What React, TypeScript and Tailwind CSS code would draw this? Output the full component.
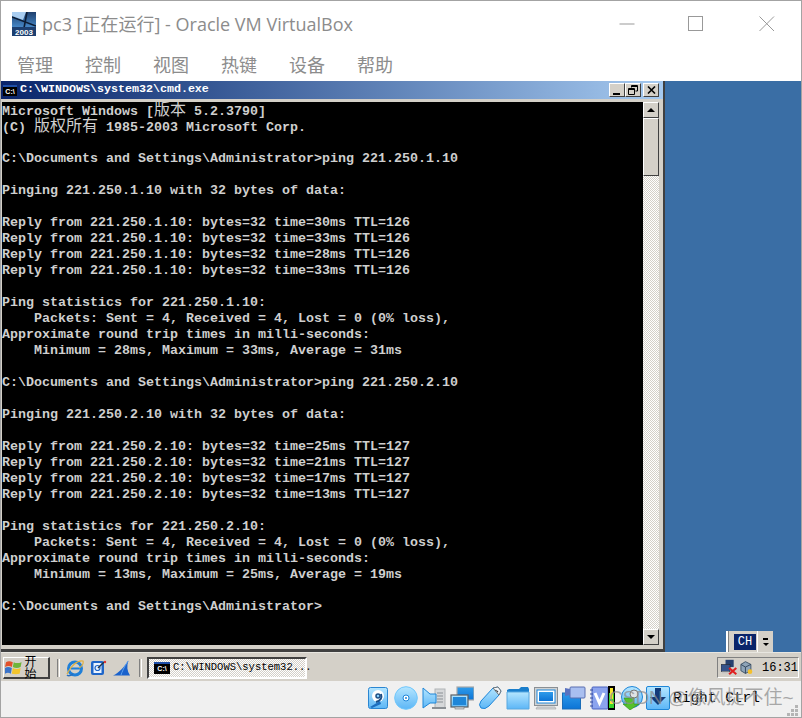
import React from "react";

const CJK = "font-['Liberation_Mono','Noto_Sans_CJK_SC',monospace]";

const lines: React.ReactNode[] = [
  <>Microsoft Windows [<span className="text-[16px] font-normal">版本</span> 5.2.3790]</>,
  <>(C) <span className="text-[16px] font-normal">版权所有</span> 1985-2003 Microsoft Corp.</>,
  "",
  "C:\\Documents and Settings\\Administrator>ping 221.250.1.10",
  "",
  "Pinging 221.250.1.10 with 32 bytes of data:",
  "",
  "Reply from 221.250.1.10: bytes=32 time=30ms TTL=126",
  "Reply from 221.250.1.10: bytes=32 time=33ms TTL=126",
  "Reply from 221.250.1.10: bytes=32 time=28ms TTL=126",
  "Reply from 221.250.1.10: bytes=32 time=33ms TTL=126",
  "",
  "Ping statistics for 221.250.1.10:",
  "    Packets: Sent = 4, Received = 4, Lost = 0 (0% loss),",
  "Approximate round trip times in milli-seconds:",
  "    Minimum = 28ms, Maximum = 33ms, Average = 31ms",
  "",
  "C:\\Documents and Settings\\Administrator>ping 221.250.2.10",
  "",
  "Pinging 221.250.2.10 with 32 bytes of data:",
  "",
  "Reply from 221.250.2.10: bytes=32 time=25ms TTL=127",
  "Reply from 221.250.2.10: bytes=32 time=21ms TTL=127",
  "Reply from 221.250.2.10: bytes=32 time=17ms TTL=127",
  "Reply from 221.250.2.10: bytes=32 time=13ms TTL=127",
  "",
  "Ping statistics for 221.250.2.10:",
  "    Packets: Sent = 4, Received = 4, Lost = 0 (0% loss),",
  "Approximate round trip times in milli-seconds:",
  "    Minimum = 13ms, Maximum = 25ms, Average = 19ms",
  "",
  "C:\\Documents and Settings\\Administrator>",
];

const bevel = "border border-t-white border-l-white border-r-[#404040] border-b-[#404040] bg-[#d4d0c8]";
const checker = "bg-[conic-gradient(#d4d0c8_25%,#ffffff_0_50%,#d4d0c8_0_75%,#ffffff_0)] bg-[length:2px_2px]";

function Logo2003() {
  return (
    <svg width="24" height="24" viewBox="0 0 24 24" className="shrink-0">
      <defs>
        <linearGradient id="lg" x1="0" y1="0" x2="0" y2="1">
          <stop offset="0" stopColor="#1f3f6d" />
          <stop offset="0.7" stopColor="#4a8fd0" />
          <stop offset="1" stopColor="#7ab4e6" />
        </linearGradient>
      </defs>
      <rect width="24" height="24" fill="url(#lg)" />
      <path d="M0 5L24 14M15 0L12 16" stroke="#0c1c34" strokeWidth="1.6" fill="none" />
      <path d="M0 0H14L11 8L0 4Z" fill="#a9cdf0" />
      <rect x="0" y="15" width="24" height="9" fill="#1d3f70" />
      <text x="12" y="22.5" textAnchor="middle" fontSize="8" fontWeight="700" fill="#fff" fontFamily="Liberation Sans, sans-serif">2003</text>
    </svg>
  );
}

function CmdIcon({ w = 14, h = 11 }: { w?: number; h?: number }) {
  return (
    <span
      style={{ width: w, height: h }}
      className="shrink-0 inline-flex items-center justify-center bg-black border-t-2 border-t-[#1f4fa8] text-white text-[7px] leading-none font-bold font-['Liberation_Sans',sans-serif]"
    >
      C:\
    </span>
  );
}

function WinLogo() {
  return (
    <svg width="18" height="17" viewBox="0 0 18 17">
      <path d="M1 3Q4 1 8 3L7 8Q4 6 0 8Z" fill="#e2502a" />
      <path d="M9 3Q12 5 17 3L16 8Q12 10 8 8Z" fill="#6fb53a" />
      <path d="M0 9Q3 7 7 9L6 15Q3 13 0 15Z" fill="#3a73c9" />
      <path d="M8 9Q12 11 16 9L15 15Q11 16 7 15Z" fill="#f2c52e" />
    </svg>
  );
}

function IeIcon() {
  return (
    <svg width="18" height="18" viewBox="0 0 18 18">
      <circle cx="9" cy="9.5" r="6.5" fill="none" stroke="#1f7fd8" strokeWidth="3" />
      <path d="M5 9.5H14" stroke="#1f7fd8" strokeWidth="2" />
      <path d="M1 15C4 8 11 1 17 2C18 5 15 8 13 9" fill="none" stroke="#e0b040" strokeWidth="1.2" />
      <path d="M1 16Q3 18 7 15" fill="none" stroke="#2a6ebb" strokeWidth="1.4" />
    </svg>
  );
}

function MailIcon() {
  return (
    <svg width="17" height="17" viewBox="0 0 17 17">
      <rect x="1" y="2" width="13" height="14" rx="2" fill="#1f66c9" />
      <rect x="3.5" y="4" width="8" height="10" fill="#eaf3ff" />
      <circle cx="7.5" cy="9" r="2.5" fill="none" stroke="#1f66c9" strokeWidth="1.2" />
      <path d="M8 9L14 3" stroke="#234" strokeWidth="1.4" />
      <circle cx="15" cy="3" r="1.2" fill="#d33" />
    </svg>
  );
}

function FinIcon() {
  return (
    <svg width="17" height="16" viewBox="0 0 17 16">
      <path d="M0 15.5C6 13 11 7 15.5 0.5C13.5 6 14 11 17 15.5Z" fill="#1a62cc" />
      <path d="M15 1C11 7 9 12 8 15" fill="none" stroke="#5ea0ee" strokeWidth="1" />
    </svg>
  );
}

const vb = "#6fc6fb";
const vbDark = "#1f86d8";
const vbGrey = "#8a8f94";

function IconDefs() {
  return (
    <svg width="0" height="0" className="absolute">
      <defs>
        <linearGradient id="vbg" x1="0" y1="0" x2="0" y2="1">
          <stop offset="0" stopColor="#b5e6ff" />
          <stop offset="1" stopColor="#5cb6f6" />
        </linearGradient>
        <linearGradient id="vbd" x1="0" y1="0" x2="0" y2="1">
          <stop offset="0" stopColor="#2f9bea" />
          <stop offset="1" stopColor="#0c74d6" />
        </linearGradient>
      </defs>
    </svg>
  );
}

function S({ children }: { children: React.ReactNode }) {
  return (
    <svg width="24" height="24" viewBox="0 0 24 24" className="shrink-0">
      {children}
    </svg>
  );
}

const HddIcon = () => (
  <S>
    <rect x="2.5" y="1.5" width="19" height="21" rx="2" fill="url(#vbg)" stroke="#2a86d2" />
    <circle cx="12" cy="10" r="6" fill="#fff" />
    <circle cx="12" cy="10" r="2" fill="url(#vbg)" stroke="#1d4f86" strokeWidth="1.5" />
    <path d="M15 8Q17 14 10 16" fill="none" stroke="#1d4f86" strokeWidth="2" />
    <path d="M4 21L14 15L15 18L6 22Z" fill="#1d6fc0" />
  </S>
);
const DiscIcon = () => (
  <S>
    <circle cx="12" cy="12" r="11.3" fill="url(#vbg)" stroke={vb} />
    <circle cx="12" cy="12" r="3" fill="#fff" stroke={vbDark} />
    <circle cx="12" cy="12" r="1" fill={vbDark} />
  </S>
);
const AudioIcon = () => (
  <S>
    <rect x="13" y="3" width="10" height="19" fill="#d6d8da" stroke="#b0b3b6" />
    <path d="M15 7H21M15 10H21M15 13H21M15 16H21" stroke={vbGrey} />
    <path d="M10 22H24" stroke={vbGrey} strokeWidth="2" />
    <path d="M1 2L8 8H14V17H8L1 22Z" fill="url(#vbg)" stroke={vbDark} />
  </S>
);
const NetIcon = () => (
  <S>
    <rect x="7" y="1" width="17" height="13" fill="url(#vbd)" stroke="#a7a9ab" strokeWidth="1.2" />
    <rect x="1" y="9" width="17" height="12" fill="url(#vbg)" stroke="#5a5e62" strokeWidth="1.2" />
    <rect x="5" y="21" width="9" height="2" fill="#d0d2d4" stroke="#777" strokeWidth="0.6" />
    <rect x="3" y="11" width="13" height="8" fill={vbDark} />
  </S>
);
const UsbIcon = () => (
  <S>
    <path d="M15 2L20 1L23 5L21 9L11 20Q7 24 3 22Q0 19 3 15Z" fill="url(#vbg)" stroke={vbDark} />
    <path d="M15 2L20 1L23 5L21 9Z" fill="#f4f6f8" stroke="#6f7377" />
    <path d="M17.5 4L18.5 5M20 5L19 6" stroke="#444" strokeWidth="1.2" />
  </S>
);
const FolderIcon = () => (
  <S>
    <path d="M1 4L3 3H13L15 1H22L23 3V22H1Z" fill="#1a7ecb" />
    <path d="M1 6H23V23H1Z" fill="url(#vbg)" stroke="#58a8e0" />
  </S>
);
const DisplayIcon = () => (
  <S>
    <rect x="0.5" y="1.5" width="23" height="18" fill="#cfd2d4" stroke="#8a8f94" />
    <rect x="3" y="4" width="18" height="13" fill="#fff" stroke="#1f86d8" />
    <rect x="5" y="6" width="14" height="9" fill="url(#vbd)" />
    <path d="M3 21H21L22 23H2Z" fill="#d6d8da" stroke="#9a9da0" strokeWidth="0.6" />
  </S>
);
const CaptureIcon = () => (
  <S>
    <rect x="0.5" y="7" width="18" height="16" fill="url(#vbd)" stroke="#1a6db8" />
    <rect x="8" y="1" width="15" height="11" rx="1" fill="#a9bff0" stroke="#5a6fb0" />
    <path d="M8 3L3 2V10L8 9Z" fill="#5a73c0" />
  </S>
);
const VtIcon = () => (
  <svg width="18" height="24" viewBox="0 0 18 24" className="shrink-0">
    <rect x="2" y="1" width="16" height="22" rx="1" fill="#8ca4ee" stroke="#4a62c0" />
    <path d="M0 4H3M0 8H3M0 12H3M0 16H3M0 20H3" stroke="#334a9e" strokeWidth="1.2" />
    <path d="M5 7L9.5 17L14 7" fill="none" stroke="#fff" strokeWidth="3" />
  </svg>
);
const WarnIcon = () => (
  <svg width="7" height="24" viewBox="0 0 7 24" className="shrink-0">
    <rect width="7" height="24" fill="#000" />
    <rect x="1" y="7" width="5" height="15" fill="#39d42a" />
    <rect x="2" y="2" width="3" height="11" fill="#f7e92a" />
    <rect x="2" y="15" width="3" height="3" fill="#f7e92a" />
  </svg>
);
const MouseIcon = () => (
  <S>
    <circle cx="12" cy="11" r="10.5" fill="url(#vbg)" stroke={vbDark} />
    <circle cx="14" cy="8" r="4" fill="#dfe3e6" stroke="#777" />
    <path d="M4 12H14V18H19L10 24L3 18H7Z" fill="#55c02b" stroke="#2f8c16" strokeWidth="0.6" />
  </S>
);
const KeyIcon = () => (
  <S>
    <rect x="0.5" y="0.5" width="23" height="23" rx="1.5" fill="url(#vbg)" stroke={vbDark} />
    <path d="M9 2H15V11H20L12 19L4 11H9Z" fill="#123a78" />
  </S>
);

export default function App() {
  return (
    <div className={`relative w-[802px] h-[718px] flex flex-col overflow-hidden border border-[#a3a3a3] bg-white ${CJK}`}>
      <IconDefs />
      {/* VirtualBox title */}
      <div className="h-[46px] shrink-0 flex items-center pl-[11px] bg-white">
        <Logo2003 />
        <span className="ml-[6px] text-[18px] leading-none text-[#8c8c8c] font-['Open_Sans','Noto_Sans_CJK_SC',sans-serif] whitespace-pre">
          pc3 [正在运行] - Oracle VM VirtualBox
        </span>
        <div className="ml-auto flex items-center">
          <svg width="16" height="16" viewBox="0 0 16 16" className="mr-[53px]">
            <path d="M0.5 8H15.5" stroke="#999" />
          </svg>
          <svg width="16" height="16" viewBox="0 0 16 16" className="mr-[55px]">
            <rect x="0.5" y="0.5" width="14" height="14" fill="none" stroke="#999" />
          </svg>
          <svg width="16" height="16" viewBox="0 0 16 16" className="mr-[26px]">
            <path d="M0.5 0.5L15 15M15 0.5L0.5 15" stroke="#999" fill="none" />
          </svg>
        </div>
      </div>
      {/* menu */}
      <div className="h-[34px] shrink-0 flex items-center pl-[16px] gap-[32px] bg-white text-[18px] leading-none text-[#8c8c8c] font-['Noto_Sans_CJK_SC',sans-serif]">
        {["管理", "控制", "视图", "热键", "设备", "帮助"].map((m) => (
          <span key={m} className="w-[36px]">{m}</span>
        ))}
      </div>

      {/* guest area */}
      <div className="flex-1 min-h-0 flex bg-[#3a6ea5]">
        <div className="w-[664px] shrink-0 flex flex-col bg-[#d4d0c8] border-r-2 border-r-[#404040] border-b-[3px] border-b-[#404040]">
          <div className="h-[18px] shrink-0 flex items-center pl-[2px] pr-[4px] bg-gradient-to-r from-[#0a246a] to-[#a6caf0]">
            <CmdIcon />
            <span className="ml-[3px] text-[11.67px] leading-none font-bold text-white whitespace-pre">C:\WINDOWS\system32\cmd.exe</span>
            <div className="ml-auto flex items-center">
              <div className={`w-4 h-[14px] relative ${bevel}`}>
                <div className="absolute left-[3px] bottom-[1px] w-[7px] h-[2px] bg-black" />
              </div>
              <div className={`w-4 h-[14px] flex items-center justify-center ${bevel}`}>
                <svg width="10" height="10" viewBox="0 0 10 10">
                  <path d="M3.5 2.5V0.5H9.5V6H7.5M0.5 3.5H6.5V9.5H0.5Z M3.5 1.5H9.5M0.5 4.5H6.5" fill="none" stroke="#000" />
                </svg>
              </div>
              <div className={`ml-[2px] w-4 h-[14px] flex items-center justify-center ${bevel}`}>
                <svg width="9" height="8" viewBox="0 0 9 8">
                  <path d="M1 0.5L8 7.5M8 0.5L1 7.5" stroke="#000" strokeWidth="1.6" />
                </svg>
              </div>
            </div>
          </div>
          <div className="mt-[3px] ml-px mr-[4px] h-[543px] shrink-0 flex">
            <div className="flex-1 bg-black pt-px overflow-hidden text-[13.33px] leading-4 font-bold text-[#cfcfcf]">
              {lines.map((l, i) => (
                <div key={i} className="h-4 whitespace-pre">{l}</div>
              ))}
            </div>
            <div className={`w-4 shrink-0 flex flex-col ${checker}`}>
              <div className={`h-4 shrink-0 flex items-center justify-center ${bevel}`}>
                <div className="w-0 h-0 border-x-4 border-x-transparent border-b-4 border-b-black" />
              </div>
              <div className={`h-[58px] shrink-0 ${bevel}`} />
              <div className={`mt-auto h-4 shrink-0 flex items-center justify-center ${bevel}`}>
                <div className="w-0 h-0 border-x-4 border-x-transparent border-t-4 border-t-black" />
              </div>
            </div>
          </div>
        </div>
        {/* language bar */}
        <div className="flex-1 flex flex-col justify-end items-end pr-[28px]">
          <div className="w-[47px] h-[21px] flex bg-[#d4d0c8]">
            <div className="w-[3px] border-l-2 border-l-white border-r border-r-[#808080]" />
            <div className="ml-[5px] mt-[3px] w-[22px] h-4 bg-[#0a246a] text-white text-[12px] leading-4 text-center">CH</div>
            <div className="ml-px w-px bg-white" />
            <div className="flex-1 flex flex-col items-center justify-center gap-[3px]">
              <div className="w-[5px] h-[2px] bg-black" />
              <div className="w-0 h-0 border-x-[3px] border-x-transparent border-t-[3px] border-t-black" />
            </div>
          </div>
        </div>
      </div>

      {/* guest taskbar */}
      <div className="h-[29px] shrink-0 flex items-center pl-[2px] pr-[2px] pt-[3px] pb-[2px] bg-[#d4d0c8] border-t border-t-[#e8e6e0]">
        <div className={`w-[47px] h-[22px] flex items-center pl-[1px] gap-[2px] border-r-2 border-b-2 ${bevel}`}>
          <WinLogo />
          <span className="text-[12px] leading-none text-black font-['Noto_Sans_CJK_SC',sans-serif]">开始</span>
        </div>
        <div className="ml-[7px] w-[3px] h-[18px] border-l border-l-[#808080] border-r border-r-white" />
        <div className="ml-[6px] flex items-center gap-[6px]">
          <IeIcon />
          <MailIcon />
          <FinIcon />
        </div>
        <div className="ml-[9px] w-[3px] h-[18px] border-l border-l-[#808080] border-r border-r-white" />
        <div className={`ml-[5px] w-[160px] h-[22px] flex items-center pl-[5px] border-2 border-t-[#404040] border-l-[#404040] border-r-white border-b-white ${checker}`}>
          <CmdIcon w={16} h={12} />
          <span className="ml-[3px] text-[10.5px] leading-none text-black whitespace-pre">C:\WINDOWS\system32...</span>
        </div>
        <div className="ml-auto w-[82px] h-[21px] flex items-center pl-[3px] border border-t-[#808080] border-l-[#808080] border-r-white border-b-white">
          <svg width="18" height="17" viewBox="0 0 18 17">
            <rect x="5" y="0" width="9" height="8" fill="#27406e" />
            <rect x="0" y="5" width="10" height="8" fill="#35528a" stroke="#222" strokeWidth="0.6" />
            <rect x="1" y="13" width="8" height="2" fill="#c4c4c4" />
            <path d="M9 9L17 16M17 9L9 16" stroke="#e02020" strokeWidth="2.4" />
          </svg>
          <svg width="14" height="16" viewBox="0 0 14 16" className="ml-[3px]">
            <path d="M6 1L12 4V11L6 14L1 11V4Z" fill="#8ea4b8" stroke="#3a4f66" />
            <path d="M1 4L6 7L12 4M6 7V14" fill="none" stroke="#2f4258" />
            <circle cx="11" cy="12" r="2.6" fill="#f5c02a" />
          </svg>
          <span className="ml-[9px] text-[12px] leading-none text-black whitespace-pre">16:31</span>
        </div>
      </div>

      {/* VirtualBox status bar */}
      <div className="relative h-[36px] shrink-0 flex items-center pl-[365px] pb-[2px] bg-[#f0f0f0]">
        <div className="flex items-center gap-1">
          <HddIcon />
          <DiscIcon />
          <AudioIcon />
          <NetIcon />
          <UsbIcon />
          <FolderIcon />
          <DisplayIcon />
          <CaptureIcon />
        </div>
        <div className="ml-[4px] flex items-center">
          <VtIcon />
          <WarnIcon />
        </div>
        <div className="ml-[5px]"><MouseIcon /></div>
        <div className="ml-[2px]"><KeyIcon /></div>
        <span className="ml-[3px] text-[14.5px] leading-none text-black font-['Liberation_Mono',monospace] whitespace-pre">Right Ctrl</span>
        {/* watermark */}
        <span className="absolute left-[608px] top-[4px] text-[19px] leading-[26px] text-[#8f8f8f]/75 font-['Liberation_Sans','Noto_Sans_CJK_SC',sans-serif] whitespace-pre">
          CSDN @像风捉不住~
        </span>
        {/* size grip */}
        <svg width="12" height="12" viewBox="0 0 12 12" className="absolute right-[2px] bottom-[1px]">
          <path d="M8 1h3v3H8zM4 5h3v3H4zM8 5h3v3H8zM0 9h3v3H0zM4 9h3v3H4zM8 9h3v3H8z" fill="#b4b4b4" />
        </svg>
      </div>
    </div>
  );
}
